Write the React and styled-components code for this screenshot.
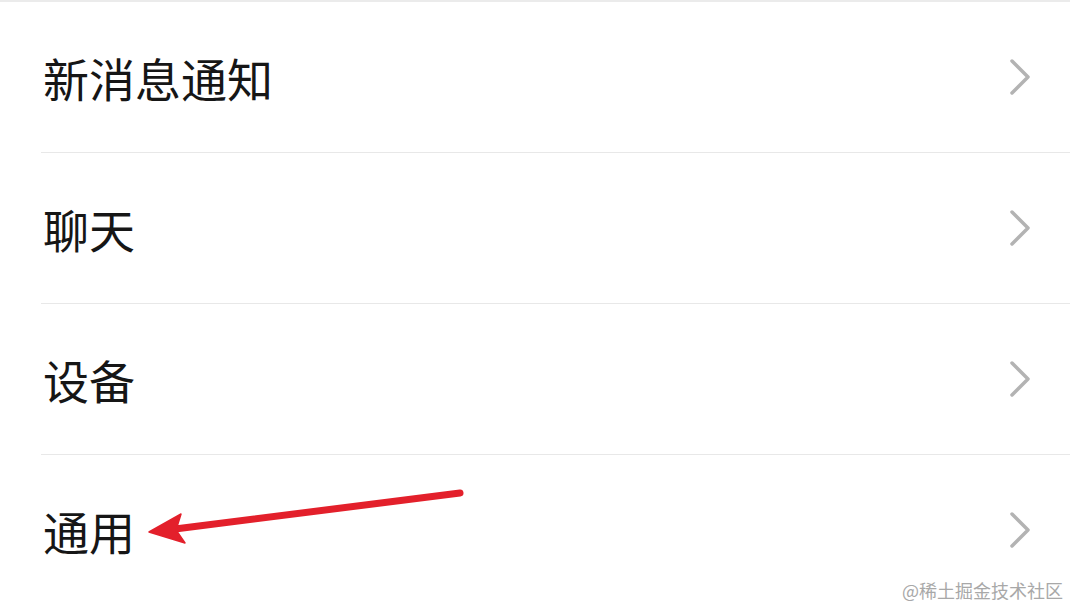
import React from "react";
import styled, { createGlobalStyle } from "styled-components";

const Global = createGlobalStyle`
  html, body { margin: 0; padding: 0; background: #fff; }
  body { font-family: "Noto Sans CJK SC", "Noto Sans", sans-serif; }
`;

const Page = styled.div`
  position: relative;
  width: 1070px;
  height: 605px;
  overflow: hidden;
  background: #fff;
  border-top: 2px solid #ebebeb;
  box-sizing: border-box;
`;

const List = styled.ul`
  list-style: none;
  margin: 0 0 0 41px;
  padding: 0;
  display: flex;
  flex-direction: column;
`;

const Item = styled.li`
  height: 150px;
  display: flex;
  align-items: center;
  justify-content: space-between;
  padding-right: 36px;
  border-bottom: ${(p) => (p.$last ? "none" : "1px solid #e8e8e8")};
`;

const Label = styled.span`
  font-size: 46px;
  line-height: 1;
  color: #161616;
  margin-left: 2px;
`;

const Chevron = styled.svg`
  width: 28px;
  height: 40px;
  display: block;
`;

const Arrow = styled.svg`
  position: absolute;
  left: 0;
  top: 0;
  pointer-events: none;
`;

const Watermark = styled.div`
  position: absolute;
  right: 7px;
  bottom: 6px;
  font-size: 18px;
  color: #a8a8a8;
  line-height: 1;
`;

const items = ["新消息通知", "聊天", "设备", "通用"];

function ChevronIcon() {
  return (
    <Chevron viewBox="0 0 28 40">
      <path d="M6 4 L22 20 L6 36" fill="none" stroke="#b3b3b3" strokeWidth="3.5" strokeLinecap="round" strokeLinejoin="round" />
    </Chevron>
  );
}

export default function App() {
  return (
    <>
      <Global />
      <Page>
        <List>
          {items.map((t, i) => (
            <Item key={t} $last={i === items.length - 1}>
              <Label>{t}</Label>
              <ChevronIcon />
            </Item>
          ))}
        </List>
        <Arrow width="1070" height="605" viewBox="0 0 1070 605">
          <line x1="460" y1="491" x2="175" y2="527" stroke="#e3202b" strokeWidth="7" strokeLinecap="round" />
          <path d="M149 530 L181 512 L176 528 L185 541 Z" fill="#e3202b" stroke="#e3202b" strokeWidth="1.5" strokeLinejoin="round" />
        </Arrow>
        <Watermark>@稀土掘金技术社区</Watermark>
      </Page>
    </>
  );
}
